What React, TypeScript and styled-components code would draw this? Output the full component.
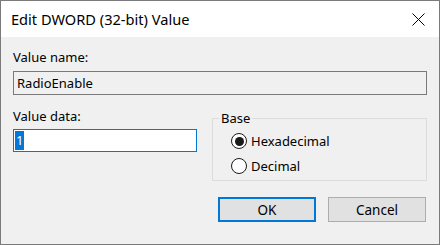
import React from 'react';
import styled, { createGlobalStyle } from 'styled-components';

const GlobalStyle = createGlobalStyle`
  html, body {
    margin: 0;
    padding: 0;
    background: #f0f0f0;
  }
  * {
    box-sizing: border-box;
  }
`;

const Window = styled.div`
  width: 440px;
  height: 245px;
  display: flex;
  flex-direction: column;
  border: 1px solid #7a7a7a;
  background: #f0f0f0;
  font-family: "Noto Sans", "Open Sans", sans-serif;
  font-size: 13px;
  color: #000;
`;

const TitleBar = styled.div`
  height: 36px;
  background: #fff;
  display: flex;
  align-items: center;
  justify-content: space-between;
  padding: 0 14px 0 10px;
`;

const Title = styled.div`
  font-size: 14.6px;
`;

const CloseIcon = styled.svg`
  width: 13px;
  height: 13px;
  display: block;
`;

const Body = styled.div`
  flex: 1;
  display: flex;
  flex-direction: column;
  padding: 11px 12px 0 12px;
`;

const Label = styled.div`
  line-height: 18px;
  height: 18px;
`;

const NameBox = styled.div`
  margin-top: 5px;
  height: 24px;
  border: 1px solid #7a7a7a;
  background: #f0f0f0;
  padding: 0 3px;
  display: flex;
  align-items: center;
`;

const Middle = styled.div`
  display: grid;
  grid-template-columns: 184px 1fr;
  column-gap: 15px;
  margin-top: 12px;
`;

const DataColumn = styled.div`
  display: flex;
  flex-direction: column;
`;

const DataInput = styled.div`
  margin-top: 4px;
  height: 23px;
  border: 1px solid #0078d7;
  background: #fff;
  padding: 0 1px;
  display: flex;
  align-items: center;
`;

const Selected = styled.span`
  background: #0078d7;
  color: #fff;
  line-height: 19px;
  padding: 0 1px;
`;

const GroupBox = styled.fieldset`
  margin: 4px 0 0 0;
  padding: 7px 0 8px 18px;
  border: 1px solid #dcdcdc;
  height: 70px;
  display: flex;
  flex-direction: column;
  gap: 7px;
`;

const Legend = styled.legend`
  padding: 0 2px;
  margin-left: -12px;
  line-height: 14px;
`;

const RadioRow = styled.div`
  display: flex;
  align-items: center;
  gap: 4px;
  height: 18px;
`;

const RadioCircle = styled.span<{ $checked?: boolean }>`
  width: 16px;
  height: 16px;
  border-radius: 50%;
  border: 1px solid #1a1a1a;
  background: #fff;
  display: flex;
  align-items: center;
  justify-content: center;
  &::after {
    content: '';
    width: 9px;
    height: 9px;
    border-radius: 50%;
    background: #1a1a1a;
    display: ${p => (p.$checked ? 'block' : 'none')};
  }
`;

const Buttons = styled.div`
  display: flex;
  justify-content: flex-end;
  gap: 12px;
  margin-top: 16px;
  padding-right: 1px;
`;

const Button = styled.button<{ $default?: boolean }>`
  width: 98px;
  height: 25px;
  font-family: inherit;
  font-size: 13.5px;
  color: #000;
  background: #e1e1e1;
  border: ${p => (p.$default ? '2px solid #0078d7' : '1px solid #adadad')};
  padding: 0;
`;

export default function App() {
  return (
    <>
      <GlobalStyle />
      <Window>
        <TitleBar>
          <Title>Edit DWORD (32-bit) Value</Title>
          <CloseIcon viewBox="0 0 13 13">
            <path d="M0.5 0.5 L12.5 12.5 M12.5 0.5 L0.5 12.5" stroke="#000" strokeWidth="1" fill="none" />
          </CloseIcon>
        </TitleBar>
        <Body>
          <Label>Value name:</Label>
          <NameBox>RadioEnable</NameBox>
          <Middle>
            <DataColumn>
              <Label>Value data:</Label>
              <DataInput>
                <Selected>1</Selected>
              </DataInput>
            </DataColumn>
            <GroupBox>
              <Legend>Base</Legend>
              <RadioRow>
                <RadioCircle $checked />
                Hexadecimal
              </RadioRow>
              <RadioRow>
                <RadioCircle />
                Decimal
              </RadioRow>
            </GroupBox>
          </Middle>
          <Buttons>
            <Button $default>OK</Button>
            <Button>Cancel</Button>
          </Buttons>
        </Body>
      </Window>
    </>
  );
}
